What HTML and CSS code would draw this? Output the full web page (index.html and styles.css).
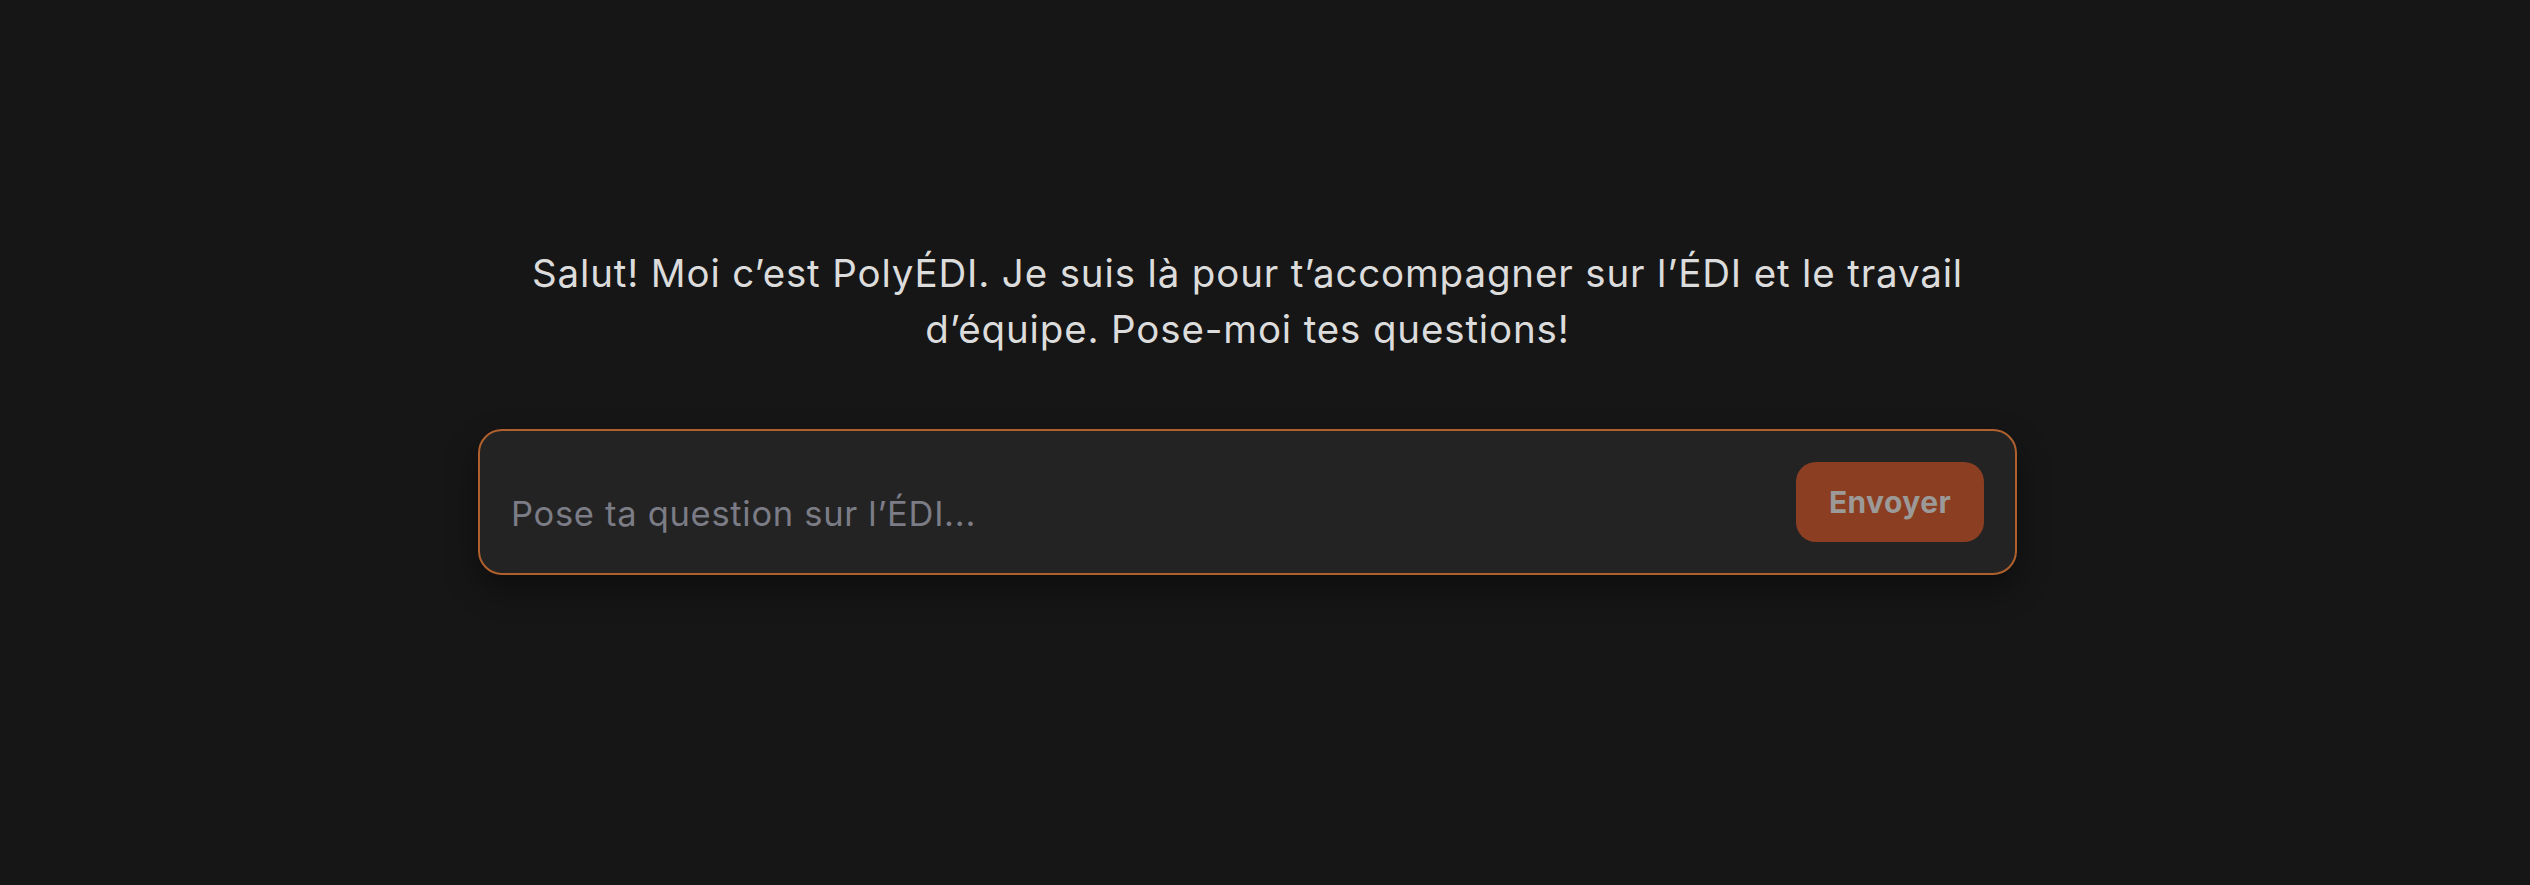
FILE: index.html
```html
<!DOCTYPE html>
<html lang="fr">
<head>
<meta charset="utf-8">
<title>PolyÉDI</title>
<link rel="stylesheet" href="styles.css">
</head>
<body>
<main class="page">
  <div class="wrap">
    <p class="intro">Salut! Moi c’est PolyÉDI. Je suis là pour t’accompagner sur l’ÉDI et le travail d’équipe. Pose-moi tes questions!</p>
    <form class="ask">
      <input class="ask-input" type="text" placeholder="Pose ta question sur l’ÉDI...">
      <button class="ask-btn" type="button">Envoyer</button>
    </form>
  </div>
</main>
</body>
</html>
```

FILE: styles.css
```css
html, body {
  margin: 0;
  padding: 0;
  background: #161616;
  height: 100%;
}
.page {
  min-height: 885px;
  padding-top: 245px;
  box-sizing: border-box;
}
.wrap {
  width: 1539px;
  margin-left: 478px;
  display: flex;
  flex-direction: column;
  align-items: center;
}
.intro {
  margin: 0;
  max-width: 1490px;
  text-align: center;
  font-family: Inter, "Liberation Sans", sans-serif;
  font-size: 38.5px;
  letter-spacing: 0.85px;
  line-height: 56px;
  color: #dcdcdc;
}
.ask {
  align-self: stretch;
  margin: 72px 0 0 0;
  height: 146px;
  box-sizing: border-box;
  border: 2px solid #b0602d;
  border-radius: 24px;
  background: #232323;
  box-shadow: 0 14px 32px rgba(0,0,0,0.4);
  display: flex;
  align-items: center;
  padding: 0 31px 0 31px;
  gap: 24px;
}
.ask-input {
  flex: 1;
  min-width: 0;
  height: 42px;
  margin-top: 23px;
  background: transparent;
  border: 0;
  outline: none;
  font-family: Inter, "Liberation Sans", sans-serif;
  font-size: 34.5px;
  letter-spacing: 0.7px;
  color: #dcdcdc;
  padding: 0;
}
.ask-input::placeholder {
  color: #7b7c86;
}
.ask-btn {
  width: 188px;
  height: 80px;
  border: 0;
  border-radius: 20px;
  background: #8b3e21;
  color: #9c9a98;
  font-family: Inter, "Liberation Sans", sans-serif;
  font-weight: 700;
  font-size: 30px;
  letter-spacing: 0.4px;
  padding: 0;
}
```
